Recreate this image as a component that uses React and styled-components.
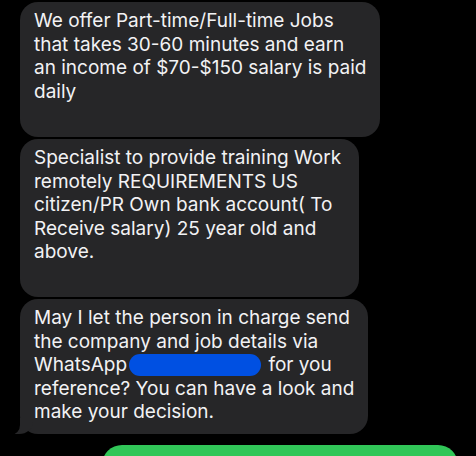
import React from 'react';
import styled, { createGlobalStyle } from 'styled-components';

const GlobalStyle = createGlobalStyle`
    html, body {
        margin: 0;
        padding: 0;
        background: #000;
        overflow: hidden;
    }
`;

const Screen = styled.div`
    width: 476px;
    height: 456px;
    background: #000;
    display: flex;
    flex-direction: column;
    gap: 2px;
    padding: 2px 18px 0 20px;
    box-sizing: border-box;
    overflow: hidden;
    font-family: Inter, "Liberation Sans", sans-serif;
`;

const Bubble = styled.div`
    position: relative;
    align-self: flex-start;
    box-sizing: border-box;
    width: ${props => props.w}px;
    height: ${props => props.h}px;
    padding: 7px ${props => props.pr || 14}px 0 14px;
    background: #262628;
    color: #f2f2f4;
    border-radius: 18px;
    font-size: 19px;
    line-height: 23.6px;
    flex-shrink: 0;
`;

const TailBubble = styled(Bubble)`
    &::before {
        content: '';
        position: absolute;
        left: -7px;
        bottom: 0;
        width: 20px;
        height: 16px;
        background: #262628;
        border-bottom-right-radius: 14px 12px;
    }
    &::after {
        content: '';
        position: absolute;
        left: -14px;
        bottom: -1px;
        width: 14px;
        height: 17px;
        background: #000;
        border-bottom-right-radius: 9px 10px;
    }
`;

const Scribble = styled.span`
    display: inline-block;
    width: 132px;
    height: 22px;
    margin: 0 2px 0 2px;
    vertical-align: -5px;
    background: #0050e2;
    border-radius: 11px;
`;

const SentBubble = styled.div`
    align-self: flex-end;
    flex-shrink: 0;
    width: 356px;
    height: 60px;
    margin-top: 9px;
    background: #31c658;
    border-radius: 20px;
`;

const App = () => {
  return (
    <>
      <GlobalStyle />
      <Screen>
        <Bubble w={360} h={135} pr={12}>
          We offer Part-time/Full-time Jobs that takes 30-60 minutes and earn
          an income of $70-$150 salary is paid daily
        </Bubble>
        <Bubble w={339} h={158} pr={16}>
          Specialist to provide training Work remotely REQUIREMENTS US
          citizen/PR Own bank account( To Receive salary) 25 year old and above.
        </Bubble>
        <TailBubble w={348} h={135} pr={8}>
          May I let the person in charge send the company and job details via
          WhatsApp<Scribble /> for you reference? You can have a look and
          make your decision.
        </TailBubble>
        <SentBubble />
      </Screen>
    </>
  );
};

export default App;
